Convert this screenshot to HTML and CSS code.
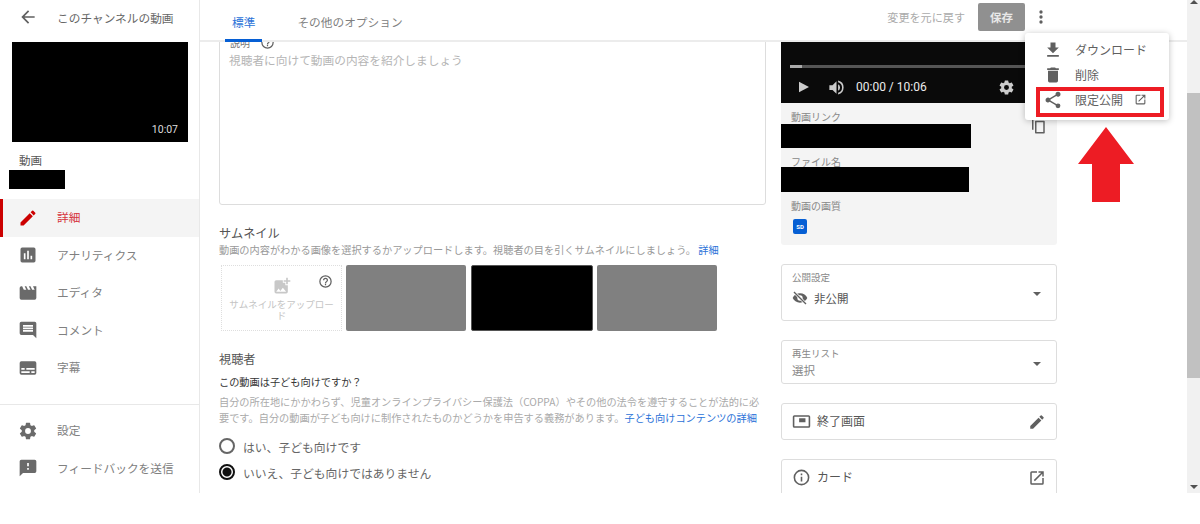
FILE: index.html
```html
<!DOCTYPE html>
<html lang="ja">
<head>
    <meta charset="UTF-8">
    <meta name="viewport" content="width=device-width, initial-scale=1.0">
    <title>動画の詳細</title>
    <link rel="stylesheet" href="styles.css">
</head>
<body>
    <div class="page">
        <!-- Sidebar -->
        <aside class="sidebar">
            <div class="back-row">
                <svg class="icon" viewBox="0 0 24 24"><path d="M20 11H7.83l5.59-5.59L12 4l-8 8 8 8 1.41-1.41L7.83 13H20z"/></svg>
                <span>このチャンネルの動画</span>
            </div>
            <div class="thumb"><span>10:07</span></div>
            <div class="video-label">動画</div>
            <div class="video-name"></div>
            <nav class="nav">
                <div class="nav-item active">
                    <svg class="icon" viewBox="0 0 24 24"><path d="M3 17.25V21h3.75L17.81 9.94l-3.75-3.75L3 17.25zM20.71 7.04a1 1 0 0 0 0-1.41l-2.34-2.34a1 1 0 0 0-1.41 0l-1.83 1.83 3.75 3.75 1.83-1.83z"/></svg>
                    <span>詳細</span>
                </div>
                <div class="nav-item">
                    <svg class="icon" viewBox="0 0 24 24"><path d="M19 3H5a2 2 0 0 0-2 2v14a2 2 0 0 0 2 2h14a2 2 0 0 0 2-2V5a2 2 0 0 0-2-2zM9 17H7v-7h2v7zm4 0h-2V7h2v10zm4 0h-2v-4h2v4z"/></svg>
                    <span>アナリティクス</span>
                </div>
                <div class="nav-item">
                    <svg class="icon" viewBox="0 0 24 24"><path d="M18 4l2 4h-3l-2-4h-2l2 4h-3l-2-4H8l2 4H7L5 4H4a2 2 0 0 0-2 2v12a2 2 0 0 0 2 2h16a2 2 0 0 0 2-2V4h-4z"/></svg>
                    <span>エディタ</span>
                </div>
                <div class="nav-item">
                    <svg class="icon" viewBox="0 0 24 24"><path d="M21.99 4A2 2 0 0 0 20 2H4a2 2 0 0 0-2 2v12a2 2 0 0 0 2 2h14l4 4-.01-18zM18 14H6v-2h12v2zm0-3H6V9h12v2zm0-3H6V6h12v2z"/></svg>
                    <span>コメント</span>
                </div>
                <div class="nav-item">
                    <svg class="icon" viewBox="0 0 24 24"><path d="M20 4H4a2 2 0 0 0-2 2v12a2 2 0 0 0 2 2h16a2 2 0 0 0 2-2V6a2 2 0 0 0-2-2zM4 12h4v2H4v-2zm10 6H4v-2h10v2zm6 0h-4v-2h4v2zm0-4H10v-2h10v2z"/></svg>
                    <span>字幕</span>
                </div>
            </nav>
            <div class="nav nav-bottom">
                <div class="nav-item">
                    <svg class="icon" viewBox="0 0 24 24"><path d="M19.43 12.98c.04-.32.07-.64.07-.98s-.03-.66-.07-.98l2.11-1.65a.5.5 0 0 0 .12-.64l-2-3.46a.5.5 0 0 0-.61-.22l-2.49 1a7.3 7.3 0 0 0-1.69-.98l-.38-2.65A.49.49 0 0 0 14 2h-4a.49.49 0 0 0-.49.42l-.38 2.65c-.61.25-1.17.59-1.69.98l-2.49-1a.5.5 0 0 0-.61.22l-2 3.46a.49.49 0 0 0 .12.64l2.11 1.65c-.04.32-.07.65-.07.98s.03.66.07.98l-2.11 1.65a.5.5 0 0 0-.12.64l2 3.46c.12.22.39.3.61.22l2.49-1c.52.4 1.08.73 1.69.98l.38 2.65c.03.24.24.42.49.42h4c.25 0 .46-.18.49-.42l.38-2.65c.61-.25 1.17-.59 1.69-.98l2.49 1c.23.09.49 0 .61-.22l2-3.46a.5.5 0 0 0-.12-.64l-2.11-1.65zM12 15.5a3.5 3.5 0 1 1 0-7 3.5 3.5 0 0 1 0 7z"/></svg>
                    <span>設定</span>
                </div>
                <div class="nav-item">
                    <svg class="icon" viewBox="0 0 24 24"><path d="M20 2H4a2 2 0 0 0-2 2l-.01 18L6 18h14a2 2 0 0 0 2-2V4a2 2 0 0 0-2-2zm-7 12h-2v-2h2v2zm0-4h-2V6h2v4z"/></svg>
                    <span>フィードバックを送信</span>
                </div>
            </div>
        </aside>

        <main class="main">
            <!-- Top bar -->
            <header class="topbar">
                <div class="tab active">標準</div>
                <div class="tab">その他のオプション</div>
                <div class="top-actions">
                    <span class="undo">変更を元に戻す</span>
                    <span class="save">保存</span>
                    <svg class="icon dots" viewBox="0 0 24 24"><path d="M12 8a2 2 0 1 0 0-4 2 2 0 0 0 0 4zm0 2a2 2 0 1 0 0 4 2 2 0 0 0 0-4zm0 6a2 2 0 1 0 0 4 2 2 0 0 0 0-4z"/></svg>
                </div>
            </header>

            <div class="content">
                <!-- Left column -->
                <section class="col-left">
                    <div class="desc-box">
                        <div class="desc-label">説明
                            <svg class="icon help" viewBox="0 0 24 24"><path d="M11 18h2v-2h-2v2zm1-16a10 10 0 1 0 0 20 10 10 0 0 0 0-20zm0 18a8 8 0 1 1 0-16 8 8 0 0 1 0 16zm0-14a4 4 0 0 0-4 4h2a2 2 0 1 1 4 0c0 2-3 1.75-3 5h2c0-2.25 3-2.5 3-5a4 4 0 0 0-4-4z"/></svg>
                        </div>
                        <div class="desc-placeholder">視聴者に向けて動画の内容を紹介しましょう</div>
                    </div>

                    <h2 class="section-title">サムネイル</h2>
                    <p class="section-text thumb-text">動画の内容がわかる画像を選択するかアップロードします。視聴者の目を引くサムネイルにしましょう。 <a class="link">詳細</a></p>
                    <div class="thumb-row">
                        <div class="thumb-upload">
                            <svg class="icon help-upload" viewBox="0 0 24 24"><path d="M11 18h2v-2h-2v2zm1-16a10 10 0 1 0 0 20 10 10 0 0 0 0-20zm0 18a8 8 0 1 1 0-16 8 8 0 0 1 0 16zm0-14a4 4 0 0 0-4 4h2a2 2 0 1 1 4 0c0 2-3 1.75-3 5h2c0-2.25 3-2.5 3-5a4 4 0 0 0-4-4z"/></svg>
                            <svg class="icon upload-icon" viewBox="0 0 24 24"><path d="M19 7v2.99s-1.99.01-2 0V7h-3s.01-1.99 0-2h3V2h2v3h3v2h-3zm-3 4V8h-3V5H5a2 2 0 0 0-2 2v12a2 2 0 0 0 2 2h12a2 2 0 0 0 2-2v-8h-3zM5 19l3-4 2 3 3-4 4 5H5z"/></svg>
                            <span>サムネイルをアップロード</span>
                        </div>
                        <div class="thumb-opt gray"></div>
                        <div class="thumb-opt black"></div>
                        <div class="thumb-opt gray"></div>
                    </div>

                    <h2 class="section-title audience">視聴者</h2>
                    <div class="question">この動画は子ども向けですか？</div>
                    <p class="section-text legal">自分の所在地にかかわらず、児童オンラインプライバシー保護法（COPPA）やその他の法令を遵守することが法的に必要です。自分の動画が子ども向けに制作されたものかどうかを申告する義務があります。<a class="link">子ども向けコンテンツの詳細</a></p>
                    <div class="radio-row"><span class="radio"></span>はい、子ども向けです</div>
                    <div class="radio-row"><span class="radio checked"></span>いいえ、子ども向けではありません</div>
                </section>

                <!-- Right column -->
                <section class="col-right">
                    <div class="player">
                        <div class="progress"><div class="progress-done"></div></div>
                        <div class="controls">
                            <svg class="icon play" viewBox="0 0 24 24"><path d="M6 4l15 8-15 8z"/></svg>
                            <svg class="icon volume" viewBox="0 0 24 24"><path d="M3 9v6h4l5 5V4L7 9H3zm13.5 3A4.5 4.5 0 0 0 14 7.97v8.05A4.5 4.5 0 0 0 16.5 12zM14 3.23v2.06a7 7 0 0 1 0 13.42v2.06a9 9 0 0 0 0-17.54z"/></svg>
                            <span class="time">00:00 / 10:06</span>
                            <svg class="icon gear" viewBox="0 0 24 24"><path d="M19.43 12.98c.04-.32.07-.64.07-.98s-.03-.66-.07-.98l2.11-1.65a.5.5 0 0 0 .12-.64l-2-3.46a.5.5 0 0 0-.61-.22l-2.49 1a7.3 7.3 0 0 0-1.69-.98l-.38-2.65A.49.49 0 0 0 14 2h-4a.49.49 0 0 0-.49.42l-.38 2.65c-.61.25-1.17.59-1.69.98l-2.49-1a.5.5 0 0 0-.61.22l-2 3.46a.49.49 0 0 0 .12.64l2.11 1.65c-.04.32-.07.65-.07.98s.03.66.07.98l-2.11 1.65a.5.5 0 0 0-.12.64l2 3.46c.12.22.39.3.61.22l2.49-1c.52.4 1.08.73 1.69.98l.38 2.65c.03.24.24.42.49.42h4c.25 0 .46-.18.49-.42l.38-2.65c.61-.25 1.17-.59 1.69-.98l2.49 1c.23.09.49 0 .61-.22l2-3.46a.5.5 0 0 0-.12-.64l-2.11-1.65zM12 15.5a3.5 3.5 0 1 1 0-7 3.5 3.5 0 0 1 0 7z"/></svg>
                        </div>
                    </div>
                    <div class="info-panel">
                        <div class="info-head">
                            <span class="info-label">動画リンク</span>
                            <svg class="icon copy" viewBox="0 0 24 24"><path d="M4 1h2v16H4zM9 5h11a1 1 0 0 1 1 1v15a1 1 0 0 1-1 1H9a1 1 0 0 1-1-1V6a1 1 0 0 1 1-1zm1 2v13h9V7z"/></svg>
                        </div>
                        <div class="redact redact-link"></div>
                        <div class="info-label file-label">ファイル名</div>
                        <div class="redact redact-file"></div>
                        <div class="info-label quality-label">動画の画質</div>
                        <div class="sd-badge">SD</div>
                    </div>

                    <div class="card card-privacy">
                        <div class="card-label">公開設定</div>
                        <div class="card-value">
                            <svg class="icon eye" viewBox="0 0 24 24"><path d="M12 5C7 5 2.7 8.100 1 12c1.700 3.900 6 7 11 7s9.300-3.100 11-7c-1.700-3.900-6-7-11-7zm0 11a4 4 0 1 1 0-8 4 4 0 0 1 0 8z"/><path d="M3 3l18 18" stroke="#fff" stroke-width="4"/><path d="M3 3l18 18" stroke="#606060" stroke-width="2"/></svg>
                            <span>非公開</span>
                        </div>
                        <span class="caret"></span>
                    </div>
                    <div class="card card-playlist">
                        <div class="card-label">再生リスト</div>
                        <div class="card-select">選択</div>
                        <span class="caret"></span>
                    </div>
                    <div class="card card-row">
                        <svg class="icon card-icon" viewBox="0 0 24 24"><path d="M21 4H3a2 2 0 0 0-2 2v12a2 2 0 0 0 2 2h18a2 2 0 0 0 2-2V6a2 2 0 0 0-2-2zm0 14H3V6h18v12zM9 8h8v5H9z"/></svg>
                        <span>終了画面</span>
                        <svg class="icon card-action" viewBox="0 0 24 24"><path d="M3 17.25V21h3.75L17.81 9.94l-3.75-3.75L3 17.25zM20.71 7.04a1 1 0 0 0 0-1.41l-2.34-2.34a1 1 0 0 0-1.41 0l-1.83 1.83 3.75 3.75 1.83-1.83z"/></svg>
                    </div>
                    <div class="card card-row card-cards">
                        <svg class="icon card-icon" viewBox="0 0 24 24"><path d="M11 7h2v2h-2zm0 4h2v6h-2zm1-9a10 10 0 1 0 0 20 10 10 0 0 0 0-20zm0 18a8 8 0 1 1 0-16 8 8 0 0 1 0 16z"/></svg>
                        <span>カード</span>
                        <svg class="icon card-action" viewBox="0 0 24 24"><path d="M19 19H5V5h7V3H5a2 2 0 0 0-2 2v14a2 2 0 0 0 2 2h14a2 2 0 0 0 2-2v-7h-2v7zM14 3v2h3.590l-9.830 9.830 1.410 1.410L19 6.410V10h2V3h-7z"/></svg>
                    </div>
                </section>
            </div>
        </main>

        <div class="scrollbar">
            <span class="arrow-up"></span>
            <div class="scroll-thumb"></div>
            <span class="arrow-down"></span>
        </div>

        <!-- Open menu -->
        <div class="menu">
            <div class="menu-item">
                <svg class="icon" viewBox="0 0 24 24"><path d="M19 9h-4V3H9v6H5l7 7 7-7zM5 18v2h14v-2H5z"/></svg>
                <span>ダウンロード</span>
            </div>
            <div class="menu-item">
                <svg class="icon" viewBox="0 0 24 24"><path d="M6 19a2 2 0 0 0 2 2h8a2 2 0 0 0 2-2V7H6v12zM19 4h-3.500l-1-1h-5l-1 1H5v2h14V4z"/></svg>
                <span>削除</span>
            </div>
            <div class="menu-item">
                <svg class="icon" viewBox="0 0 24 24"><path d="M18 16.080c-.76 0-1.440.3-1.960.77L8.910 12.700c.05-.23.09-.46.09-.7s-.04-.47-.09-.7l7.050-4.110A2.990 2.990 0 0 0 21 5a3 3 0 1 0-6 0c0 .24.04.47.09.7L8.040 9.810A2.990 2.990 0 0 0 3 12a3 3 0 0 0 5.040 2.190l7.120 4.160c-.05.21-.08.43-.08.65A2.920 2.920 0 1 0 18 16.080z"/></svg>
                <span>限定公開</span>
                <svg class="icon menu-open" viewBox="0 0 24 24"><path d="M19 19H5V5h7V3H5a2 2 0 0 0-2 2v14a2 2 0 0 0 2 2h14a2 2 0 0 0 2-2v-7h-2v7zM14 3v2h3.590l-9.830 9.830 1.410 1.410L19 6.410V10h2V3h-7z"/></svg>
            </div>
        </div>

        <!-- Red annotation on the screenshot -->
        <div class="mark-box"></div>
        <svg class="mark-arrow" viewBox="0 0 58 76"><path d="M29 0l28 37H43v38H15V37H1z"/></svg>
    </div>
</body>
</html>
```

FILE: styles.css
```css
* {
    box-sizing: border-box;
}
body {
    margin: 0;
    background-color: #fff;
    font-family: "Noto Sans CJK JP", "Noto Sans", Roboto, sans-serif;
    color: #606060;
}
.page {
    position: relative;
    display: flex;
    width: 1200px;
    height: 493px;
    overflow: hidden;
}
.icon {
    display: block;
    width: 20px;
    height: 20px;
    flex: none;
    fill: #606060;
}

/* Sidebar */
.sidebar {
    width: 200px;
    flex: none;
    display: flex;
    flex-direction: column;
    border-right: 1px solid #e8e8e8;
}
.back-row {
    display: flex;
    align-items: center;
    height: 34px;
    padding-left: 18px;
    font-size: 11.7px;
    color: #666;
}
.back-row span {
    margin-left: 19px;
}
.thumb {
    display: flex;
    align-items: flex-end;
    justify-content: flex-end;
    width: 176px;
    height: 100px;
    margin: 8px 0 0 12px;
    padding: 0 10px 6px 0;
    background-color: #000;
    color: #ddd;
    font-size: 10.5px;
    font-family: Roboto, sans-serif;
}
.video-label {
    margin: 10px 0 0 19px;
    height: 18px;
    line-height: 16px;
    font-size: 11.5px;
    color: #555;
}
.video-name {
    width: 56px;
    height: 19px;
    margin-left: 9px;
    background-color: #000;
}
.nav {
    margin-top: 10px;
}
.nav-bottom {
    margin-top: auto;
    padding: 7px 0 6px;
    border-top: 1px solid #e8e8e8;
}
.nav-item {
    display: flex;
    align-items: center;
    height: 37.5px;
    padding-left: 18px;
    font-size: 11.7px;
    color: #808080;
}
.nav-item span {
    margin-left: 19px;
    margin-bottom: 2px;
}
.nav-item .icon {
    fill: #6a6a6a;
}
.nav-item.active {
    background-color: #f4f4f4;
    border-left: 3px solid #cc0000;
    padding-left: 15px;
    color: #d6333c;
}
.nav-item.active .icon {
    fill: #cc0000;
}

/* Main area */
.main {
    flex: 1;
    min-width: 0;
    display: flex;
    flex-direction: column;
}
.topbar {
    display: flex;
    height: 42px;
    flex: none;
    padding-left: 25px;
    border-bottom: 2px solid #ececec;
}
.tab {
    height: 42px;
    line-height: 44px;
    padding: 0 7px;
    font-size: 11.7px;
    color: #808080;
    margin-right: 28px;
}
.tab.active {
    color: #2a72d8;
    border-bottom: 3px solid #065fd4;
}
.top-actions {
    display: flex;
    align-items: flex-start;
    margin-left: auto;
    padding-right: 136px;
}
.undo {
    margin-top: 9px;
    font-size: 11.1px;
    color: #aaa;
}
.save {
    width: 47px;
    height: 28px;
    line-height: 28px;
    margin: 3px 0 0 13px;
    background-color: #909090;
    border-radius: 2px;
    color: #e8e8e8;
    font-size: 11.5px;
    font-weight: 700;
    text-align: center;
}
.dots {
    margin: 7px 0 0 6px;
}
.content {
    flex: 1;
    min-height: 0;
    overflow: hidden;
    display: flex;
    padding-left: 19px;
    gap: 15px;
}
.col-left {
    width: 547px;
    flex: none;
}
.col-right {
    width: 276px;
    flex: none;
}

/* Left column */
.desc-box {
    height: 179px;
    margin-top: -16px;
    padding: 8px 10px;
    border: 1px solid #ddd;
    border-radius: 3px;
}
.desc-label {
    display: flex;
    align-items: center;
    gap: 10px;
    height: 14px;
    font-size: 10px;
    color: #777;
}
.help {
    width: 15px;
    height: 15px;
}
.desc-placeholder {
    margin-top: 2px;
    margin-left: -1px;
    font-size: 11.7px;
    color: #b5b5b5;
}
.section-title {
    margin: 19px 0 0;
    font-size: 12.2px;
    line-height: 19px;
    font-weight: 400;
    color: #555;
}
.section-text {
    margin: 0;
    font-size: 10.2px;
    color: #aaa;
}
.thumb-text {
    margin-top: -1px;
    line-height: 16px;
    color: #999;
}
.link {
    color: #2a72d8;
}
.thumb-row {
    display: flex;
    gap: 4px;
    margin-top: 7px;
    height: 66px;
}
.thumb-upload {
    position: relative;
    width: 121px;
    margin-left: 2px;
    padding: 10px 6px 0;
    border: 1px dotted #dedede;
    font-size: 9.5px;
    line-height: 11px;
    color: #c4c4c4;
    text-align: center;
}
.upload-icon {
    margin: 0 auto 3px;
    fill: #c8c8c8;
}
.help-upload {
    position: absolute;
    top: 8px;
    right: 8px;
    width: 15px;
    height: 15px;
}
.thumb-opt {
    width: 120px;
    border-radius: 2px;
}
.thumb-opt.gray {
    background-color: #808080;
}
.thumb-opt.black {
    background-color: #000;
    width: 122px;
    margin-left: 1px;
    border: 1px solid #555;
}
.section-title.audience {
    margin-top: 19px;
}
.question {
    margin-top: 3px;
    font-size: 10.2px;
    line-height: 20px;
    color: #333;
}
.legal {
    margin-top: 2px;
    line-height: 16px;
}
.radio-row {
    display: flex;
    align-items: center;
    gap: 8px;
    height: 26px;
    font-size: 11.8px;
    color: #666;
}
.legal + .radio-row {
    margin-top: 7px;
}
.radio {
    width: 16px;
    height: 16px;
    border: 2px solid #666;
    border-radius: 50%;
}
.radio.checked {
    border-color: #111;
    background: radial-gradient(circle, #111 0 4px, #fff 5px);
}

/* Right column */
.player {
    height: 61px;
    padding: 23px 9px 0;
    background-color: #0a0a0a;
}
.progress {
    height: 3px;
    background-color: #555;
}
.progress-done {
    width: 12px;
    height: 3px;
    background-color: #aaa;
}
.controls {
    display: flex;
    align-items: center;
    height: 36px;
    margin-top: 1px;
    padding-right: 33px;
}
.play {
    width: 16px;
    height: 16px;
    margin-left: 5px;
    fill: #ccc;
}
.volume {
    width: 19px;
    height: 19px;
    margin-left: 16px;
    fill: #ccc;
}
.time {
    margin-left: 10px;
    font-family: Roboto, sans-serif;
    font-size: 12px;
    color: #ececec;
}
.gear {
    margin-left: auto;
    width: 17px;
    height: 17px;
    fill: #ccc;
}
.info-panel {
    height: 142px;
    padding: 7px 0 0;
    background-color: #f4f4f4;
    border-radius: 0 0 3px 3px;
}
.info-head {
    display: flex;
    justify-content: space-between;
    padding-right: 10px;
}
.info-label {
    display: block;
    margin-left: 10px;
    height: 14px;
    font-size: 10px;
    line-height: 14px;
    color: #888;
}
.copy {
    width: 18px;
    height: 18px;
    margin-top: 7px;
    margin-bottom: -11px;
}
.redact {
    background-color: #000;
}
.redact-link {
    width: 190px;
    height: 24px;
}
.redact-file {
    width: 188px;
    height: 25px;
}
.file-label {
    margin-top: 7px;
    height: 12px;
    overflow: hidden;
}
.quality-label {
    margin-top: 7px;
}
.sd-badge {
    width: 14px;
    height: 15px;
    line-height: 15px;
    margin: 6px 0 0 12px;
    background-color: #065fd4;
    border-radius: 2px;
    color: #fff;
    font-family: Roboto, sans-serif;
    font-size: 6px;
    font-weight: 700;
    text-align: center;
}
.card {
    position: relative;
    margin-top: 19px;
    padding: 0 10px;
    border: 1px solid #ddd;
    border-radius: 3px;
}
.card-privacy {
    height: 57px;
}
.card-playlist {
    height: 44px;
}
.card-label {
    margin-top: 5px;
    font-size: 9.5px;
    line-height: 14px;
    color: #888;
}
.card-value {
    display: flex;
    align-items: center;
    gap: 6px;
    margin-top: 6px;
    font-size: 11.5px;
    color: #555;
}
.eye {
    width: 16px;
    height: 16px;
}
.card-select {
    margin-top: 1px;
    font-size: 11.5px;
    line-height: 18px;
    color: #888;
}
.caret {
    position: absolute;
    top: 27px;
    right: 15px;
    border-style: solid;
    border-width: 4px 4px 0;
    border-color: #606060 transparent transparent;
}
.card-playlist .caret {
    top: 21px;
}
.card-row {
    display: flex;
    align-items: center;
    height: 37px;
    font-size: 12px;
    color: #555;
}
.card-row span {
    margin-bottom: 2px;
}
.card-cards {
    height: 48px;
    padding-bottom: 11px;
}
.card-icon {
    width: 19px;
    height: 19px;
    margin-right: 6px;
}
.card-action {
    margin-left: auto;
    width: 18px;
    height: 18px;
}

/* Scrollbar */
.scrollbar {
    width: 13px;
    flex: none;
    display: flex;
    flex-direction: column;
    align-items: center;
    background-color: #f1f1f1;
}
.scroll-thumb {
    width: 100%;
    height: 285px;
    margin-top: 89px;
    background-color: #c1c1c1;
}
.arrow-up {
    border-style: solid;
    border-width: 0 4px 4px;
    border-color: transparent transparent #505050;
}
.arrow-down {
    margin-top: auto;
    margin-bottom: 4px;
    border-style: solid;
    border-width: 4px 4px 0;
    border-color: #505050 transparent transparent;
}

/* Menu and annotation */
.menu {
    position: absolute;
    left: 1025px;
    top: 33px;
    width: 144px;
    height: 87px;
    padding-top: 4px;
    background-color: #fff;
    border-radius: 3px;
    box-shadow: 0 1px 6px rgba(0, 0, 0, 0.25);
}
.menu-item {
    display: flex;
    align-items: center;
    height: 25px;
    padding-left: 18px;
    font-size: 12px;
    color: #606060;
}
.menu-item span {
    margin-left: 12px;
}
.menu-open {
    width: 13px;
    height: 13px;
    margin-left: 11px;
}
.mark-box {
    position: absolute;
    left: 1036px;
    top: 87px;
    width: 128px;
    height: 30px;
    border: 4px solid #ed1c24;
}
.mark-arrow {
    position: absolute;
    left: 1077px;
    top: 127px;
    width: 58px;
    height: 76px;
    fill: #ed1c24;
}
```
